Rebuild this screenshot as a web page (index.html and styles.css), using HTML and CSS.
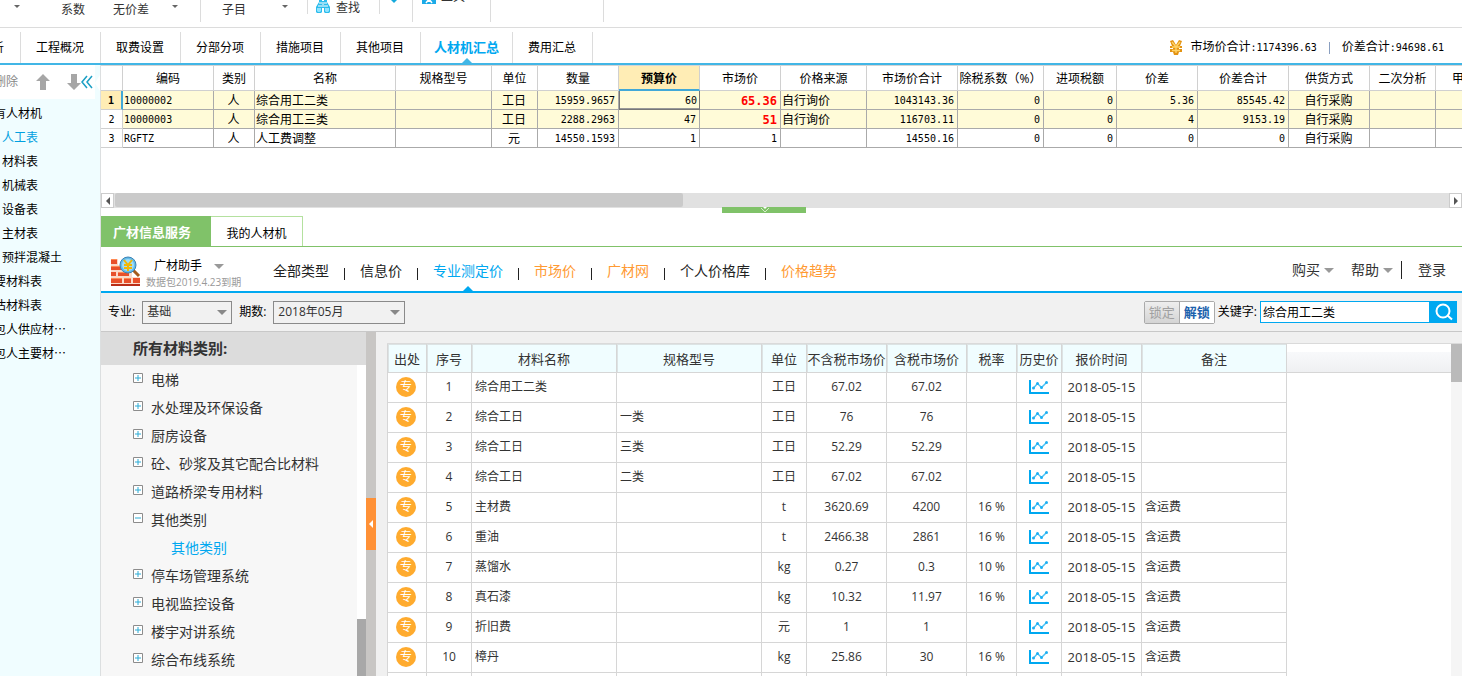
FILE: index.html
```html
<!DOCTYPE html>
<html lang="zh-CN">
  <head>
    <meta charset="UTF-8" />
    <meta name="viewport" content="width=device-width, initial-scale=1.0" />
    <title>人材机汇总</title>
    <link rel="stylesheet" href="styles.css" />
  </head>
  <body>
    <svg class="sprite" aria-hidden="true">
      <symbol id="chart" viewBox="0 0 20 14">
        <path d="M1 0V13H20" fill="none" stroke="#00a8f0" stroke-width="2" />
        <path d="M4.500 8L8.500 3.500L12.500 7.500L17.500 2.500" fill="none" stroke="#4cc2f4" stroke-width="1.500" />
        <circle cx="4.500" cy="8" r="1.500" fill="#1eb0f2" />
        <circle cx="8.500" cy="3.500" r="1.500" fill="#1eb0f2" />
        <circle cx="12.500" cy="7.500" r="1.500" fill="#1eb0f2" />
        <circle cx="17.500" cy="2.500" r="1.500" fill="#1eb0f2" />
      </symbol>
      <symbol id="plus" viewBox="0 0 10 10">
        <path d="M.5 .5H9.500V9.500H.5Z" fill="#fff" stroke="#8c8c8c" />
        <path d="M2 5H8M5 2V8" stroke="#2cacd6" />
      </symbol>
      <symbol id="minus" viewBox="0 0 10 10">
        <path d="M.5 .5H9.500V9.500H.5Z" fill="#fff" stroke="#8c8c8c" />
        <path d="M2 5H8" stroke="#2cacd6" />
      </symbol>
    </svg>

    <header class="ribbon">
      <div class="ribbon-group group-adjust">
        <i class="caret"></i><span>系数</span><span>无价差</span><i class="caret"></i>
      </div>
      <div class="ribbon-group group-item"><span>子目</span><i class="caret"></i></div>
      <div class="ribbon-group group-find">
        <svg width="16" height="16" viewBox="0 0 16 16">
          <path d="M4 0H7V3H9V0H12V4L15 9V14L14 15H10L9 14V10H7V14L6 15H2L1 14V9L4 4Z" fill="#2cbcec" />
          <path d="M4 5H7M9 5H12M3 8H7M9 8H13M8 4V9" stroke="#fff" />
          <path d="M2 10H6V13L5 14H3L2 13ZM10 10H14V13L13 14H11L10 13Z" fill="#8fe3ff" />
        </svg>
        <span>查找</span>
      </div>
      <div class="ribbon-group group-more"><i class="caret caret-blue"></i></div>
      <div class="ribbon-group group-tool">
        <svg width="14" height="14" viewBox="0 0 14 14">
          <path d="M0 0H14V14H0Z" fill="#1cabe8" />
          <path d="M4 13L7 9L10 13M4 8L7 11L10 8" fill="none" stroke="#fff" stroke-width="1.500" />
        </svg>
        <span>工具</span>
      </div>
      <div class="ribbon-group group-empty"></div>
    </header>

    <div class="tabbar">
      <nav class="tabs">
        <a href="#">造价分析</a>
        <a href="#">工程概况</a>
        <a href="#">取费设置</a>
        <a href="#">分部分项</a>
        <a href="#">措施项目</a>
        <a href="#">其他项目</a>
        <a href="#" class="active">人材机汇总</a>
        <a href="#">费用汇总</a>
      </nav>
      <div class="totals">
        <svg width="14" height="16" viewBox="0 0 14 16">
          <path d="M1 1L4 0L7 5L10 0L13 1L11 6H13V8H10V9H13V12H10L9 15H5L4 12H1V9H4V8H1V6H3Z" fill="#e39312" />
          <path d="M3 2L7 7L11 2M3 7H11M3 10.500H11M7 7V13" fill="none" stroke="#ffd469" stroke-width="1.300" />
        </svg>
        <span>市场价合计<b class="num">:1174396.63</b></span>
        <i class="divider"></i>
        <span>价差合计<b class="num">:94698.61</b></span>
      </div>
    </div>

    <div class="workspace">
      <aside class="sidebar">
        <div class="sidebar-tools">
          <button class="delete-btn">删除</button>
          <button class="icon-btn" aria-label="上移">
            <svg width="14" height="16" viewBox="0 0 14 16"><path d="M7 0L14 7H10V16H4V7H0Z" fill="#a6a6a6" /></svg>
          </button>
          <button class="icon-btn" aria-label="下移">
            <svg width="14" height="16" viewBox="0 0 14 16"><path d="M7 16L14 9H10V0H4V9H0Z" fill="#a6a6a6" /></svg>
          </button>
          <button class="icon-btn" aria-label="收起">
            <svg width="12" height="14" viewBox="0 0 12 14"><path d="M6 1L1 7L6 13M11 1L6 7L11 13" fill="none" stroke="#1c9fc4" stroke-width="1.500" /></svg>
          </button>
        </div>
        <i class="notch"></i>
        <ul class="category-list">
          <li>所有人材机</li>
          <li class="child selected">人工表</li>
          <li class="child">材料表</li>
          <li class="child">机械表</li>
          <li class="child">设备表</li>
          <li class="child">主材表</li>
          <li class="child">预拌混凝土</li>
          <li>主要材料表</li>
          <li>暂估材料表</li>
          <li>发包人供应材⋯</li>
          <li>承包人主要材⋯</li>
        </ul>
      </aside>

      <main class="main">
        <div class="summary">
          <table class="summary-table">
            <colgroup>
              <col class="w22" /><col class="w91" /><col class="w41" /><col class="w141" /><col class="w96" /><col class="w46" />
              <col class="w81" /><col class="w81" /><col class="w81" /><col class="w86" /><col class="w91" /><col class="w86" />
              <col class="w73" /><col class="w81" /><col class="w91" /><col class="w81" /><col class="w66" /><col class="w81" />
            </colgroup>
            <thead>
              <tr>
                <th></th><th>编码</th><th>类别</th><th>名称</th><th>规格型号</th><th>单位</th><th>数量</th>
                <th class="current">预算价</th><th>市场价</th><th>价格来源</th><th>市场价合计</th><th>除税系数（%）</th>
                <th>进项税额</th><th>价差</th><th>价差合计</th><th>供货方式</th><th>二次分析</th><th>甲供数量</th>
              </tr>
            </thead>
            <tbody>
              <tr class="changed current-row">
                <th>1</th><td class="code">10000002</td><td class="mid">人</td><td>综合用工二类</td><td></td><td class="mid">工日</td>
                <td class="num">15959.9657</td><td class="num focus">60</td><td class="num up">65.36</td><td>自行询价</td>
                <td class="num">1043143.36</td><td class="num">0</td><td class="num">0</td><td class="num">5.36</td>
                <td class="num">85545.42</td><td class="mid">自行采购</td><td></td><td></td>
              </tr>
              <tr class="changed">
                <th>2</th><td class="code">10000003</td><td class="mid">人</td><td>综合用工三类</td><td></td><td class="mid">工日</td>
                <td class="num">2288.2963</td><td class="num">47</td><td class="num up">51</td><td>自行询价</td>
                <td class="num">116703.11</td><td class="num">0</td><td class="num">0</td><td class="num">4</td>
                <td class="num">9153.19</td><td class="mid">自行采购</td><td></td><td></td>
              </tr>
              <tr>
                <th>3</th><td class="code">RGFTZ</td><td class="mid">人</td><td>人工费调整</td><td></td><td class="mid">元</td>
                <td class="num">14550.1593</td><td class="num">1</td><td class="num">1</td><td></td>
                <td class="num">14550.16</td><td class="num">0</td><td class="num">0</td><td class="num">0</td>
                <td class="num">0</td><td class="mid">自行采购</td><td></td><td></td>
              </tr>
            </tbody>
          </table>
        </div>

        <div class="hscroll">
          <button class="scroll-btn" aria-label="向左"><i class="tri-left"></i></button>
          <div class="hscroll-track"><div class="hscroll-thumb"></div></div>
          <button class="scroll-btn" aria-label="向右"><i class="tri-right"></i></button>
        </div>
        <div class="handle">
          <svg width="84" height="6" viewBox="0 0 84 6">
            <path d="M0 0H84V6H0Z" fill="#80c269" />
            <path d="M41 0H45L43 2Z" fill="#fff" />
            <path d="M39 1L43 5L47 1" fill="none" stroke="#d5edca" />
          </svg>
        </div>

        <div class="service-tabs">
          <button class="service-tab on">广材信息服务</button>
          <button class="service-tab">我的人材机</button>
        </div>

        <div class="helper">
          <svg class="logo" width="32" height="32" viewBox="0 0 32 32">
            <path d="M1 3H8V9H14V15H22V21H30V30H1Z" fill="#fbd9c8" />
            <path d="M1 3H7V8H1ZM1 10H11V14H1ZM1 16H6V20H1ZM8 16H19V20H8ZM1 22H12V27H1ZM14 22H21V27H14ZM23 22H30V27H23Z" fill="#e8502a" />
            <path d="M1 3H7V4H1ZM1 10H11V11H1ZM8 16H19V17H8ZM1 22H12V23H1ZM14 22H21V23H14Z" fill="#ff8a55" />
            <path d="M1 28H30V30H1Z" fill="#b92d17" />
            <path d="M23 14L29 20" stroke="#a35a1b" stroke-width="3" />
            <circle cx="18" cy="9" r="8" fill="#65bdea" stroke="#3b82b5" />
            <circle cx="18" cy="9" r="6" fill="#9fdcf8" />
            <path d="M14 4L18 9L22 4M14 9H22M14 12H22M18 9V15" fill="none" stroke="#f2b705" stroke-width="2" />
          </svg>
          <div class="helper-name">
            <div class="helper-title">广材助手 <i class="caret-down"></i></div>
            <div class="helper-sub">数据包2019.4.23到期</div>
          </div>
          <nav class="price-nav">
            <a href="#">全部类型</a><a href="#">信息价</a><a href="#" class="active">专业测定价</a><a href="#" class="hot">市场价</a><a href="#" class="hot">广材网</a><a href="#">个人价格库</a><a href="#" class="hot">价格趋势</a>
          </nav>
          <div class="account">
            <a href="#">购买</a><i class="caret-down"></i>
            <a href="#" class="help">帮助</a><i class="caret-down"></i>
            <a href="#" class="login">登录</a>
          </div>
        </div>

        <form class="filter">
          <label for="major">专业:</label>
          <div class="select-wrap major"><select id="major"><option>基础</option></select></div>
          <label for="period">期数:</label>
          <div class="select-wrap period"><select id="period"><option>2018年05月</option></select></div>
          <div class="lock-group">
            <button type="button" class="lock" disabled>锁定</button><button type="button" class="unlock">解锁</button>
          </div>
          <label for="keyword">关键字:</label>
          <input id="keyword" type="text" value="综合用工二类" />
          <button type="button" class="search-btn" aria-label="搜索">
            <svg width="20" height="18" viewBox="0 0 20 18">
              <circle cx="9" cy="8" r="6.500" fill="none" stroke="#fff" stroke-width="2" />
              <path d="M13.500 12.500L18 16.500" stroke="#fff" stroke-width="2" />
            </svg>
          </button>
        </form>

        <div class="lower">
          <section class="tree">
            <h2>所有材料类别:</h2>
            <div class="tree-body">
              <ul>
                <li><svg class="toggle"><use href="#plus" /></svg>电梯</li>
                <li><svg class="toggle"><use href="#plus" /></svg>水处理及环保设备</li>
                <li><svg class="toggle"><use href="#plus" /></svg>厨房设备</li>
                <li><svg class="toggle"><use href="#plus" /></svg>砼、砂浆及其它配合比材料</li>
                <li><svg class="toggle"><use href="#plus" /></svg>道路桥梁专用材料</li>
                <li><svg class="toggle"><use href="#minus" /></svg>其他类别</li>
                <li class="leaf">其他类别</li>
                <li><svg class="toggle"><use href="#plus" /></svg>停车场管理系统</li>
                <li><svg class="toggle"><use href="#plus" /></svg>电视监控设备</li>
                <li><svg class="toggle"><use href="#plus" /></svg>楼宇对讲系统</li>
                <li><svg class="toggle"><use href="#plus" /></svg>综合布线系统</li>
              </ul>
              <div class="tree-scroll"><div class="tree-thumb"></div></div>
            </div>
          </section>
          <div class="splitter"><button class="collapse" aria-label="折叠"><i class="tri-left white"></i></button></div>
          <section class="result">
            <table class="price-table">
              <colgroup>
                <col class="w40" /><col class="w45" /><col class="w145" /><col class="w145" /><col class="w45" /><col class="w80" />
                <col class="w80" /><col class="w50" /><col class="w45" /><col class="w80" /><col class="w145" />
              </colgroup>
              <thead>
                <tr>
                  <th>出处</th><th>序号</th><th>材料名称</th><th>规格型号</th><th>单位</th><th>不含税市场价</th>
                  <th>含税市场价</th><th>税率</th><th>历史价</th><th>报价时间</th><th>备注</th>
                </tr>
              </thead>
              <tbody>
                <tr><td><i class="badge">专</i></td><td>1</td><td class="left">综合用工二类</td><td class="left"></td><td>工日</td><td>67.02</td><td>67.02</td><td></td><td><svg class="chart"><use href="#chart" /></svg></td><td class="date">2018-05-15</td><td class="left"></td></tr>
                <tr><td><i class="badge">专</i></td><td>2</td><td class="left">综合工日</td><td class="left">一类</td><td>工日</td><td>76</td><td>76</td><td></td><td><svg class="chart"><use href="#chart" /></svg></td><td class="date">2018-05-15</td><td class="left"></td></tr>
                <tr><td><i class="badge">专</i></td><td>3</td><td class="left">综合工日</td><td class="left">三类</td><td>工日</td><td>52.29</td><td>52.29</td><td></td><td><svg class="chart"><use href="#chart" /></svg></td><td class="date">2018-05-15</td><td class="left"></td></tr>
                <tr><td><i class="badge">专</i></td><td>4</td><td class="left">综合工日</td><td class="left">二类</td><td>工日</td><td>67.02</td><td>67.02</td><td></td><td><svg class="chart"><use href="#chart" /></svg></td><td class="date">2018-05-15</td><td class="left"></td></tr>
                <tr><td><i class="badge">专</i></td><td>5</td><td class="left">主材费</td><td class="left"></td><td>t</td><td>3620.69</td><td>4200</td><td>16 %</td><td><svg class="chart"><use href="#chart" /></svg></td><td class="date">2018-05-15</td><td class="left">含运费</td></tr>
                <tr><td><i class="badge">专</i></td><td>6</td><td class="left">重油</td><td class="left"></td><td>t</td><td>2466.38</td><td>2861</td><td>16 %</td><td><svg class="chart"><use href="#chart" /></svg></td><td class="date">2018-05-15</td><td class="left">含运费</td></tr>
                <tr><td><i class="badge">专</i></td><td>7</td><td class="left">蒸馏水</td><td class="left"></td><td>kg</td><td>0.27</td><td>0.3</td><td>10 %</td><td><svg class="chart"><use href="#chart" /></svg></td><td class="date">2018-05-15</td><td class="left">含运费</td></tr>
                <tr><td><i class="badge">专</i></td><td>8</td><td class="left">真石漆</td><td class="left"></td><td>kg</td><td>10.32</td><td>11.97</td><td>16 %</td><td><svg class="chart"><use href="#chart" /></svg></td><td class="date">2018-05-15</td><td class="left">含运费</td></tr>
                <tr><td><i class="badge">专</i></td><td>9</td><td class="left">折旧费</td><td class="left"></td><td>元</td><td>1</td><td>1</td><td></td><td><svg class="chart"><use href="#chart" /></svg></td><td class="date">2018-05-15</td><td class="left">含运费</td></tr>
                <tr><td><i class="badge">专</i></td><td>10</td><td class="left">樟丹</td><td class="left"></td><td>kg</td><td>25.86</td><td>30</td><td>16 %</td><td><svg class="chart"><use href="#chart" /></svg></td><td class="date">2018-05-15</td><td class="left">含运费</td></tr>
                <tr><td></td><td></td><td></td><td></td><td></td><td></td><td></td><td></td><td></td><td></td><td></td></tr>
              </tbody>
            </table>
            <div class="header-fill"></div>
            <div class="result-scroll"><div class="result-thumb"></div></div>
          </section>
        </div>
      </main>
    </div>
  </body>
</html>
```

FILE: styles.css
```css
* {
  box-sizing: border-box;
}
body {
  display: flex;
  flex-direction: column;
  height: 100vh;
  margin: 0;
  overflow: hidden;
  background-color: #fff;
  color: #000;
  font-family: "Open Sans", "Noto Sans CJK SC", sans-serif;
  font-size: 12px;
  line-height: 18px;
}
a {
  color: inherit;
  text-decoration: none;
}
button,
input,
select {
  margin: 0;
  padding: 0;
  border: none;
  background: none;
  font: inherit;
  color: inherit;
}
ul {
  margin: 0;
  padding: 0;
  list-style: none;
}
svg {
  display: block;
  flex: none;
}
.sprite {
  position: absolute;
  width: 0;
  height: 0;
}

/* ribbon */
.ribbon {
  display: flex;
  flex: none;
  height: 28px;
  overflow: hidden;
  border-bottom: 1px solid #dcdcdc;
  color: #333;
}
.ribbon-group {
  display: flex;
  align-items: flex-start;
  height: 22px;
  border-right: 1px solid #dcdcdc;
}
.ribbon-group span {
  margin-top: 1px;
}
.caret {
  margin-top: 5px;
  border: 3px solid transparent;
  border-top-color: #666;
  border-bottom: none;
}
.caret-blue {
  margin-top: 0;
  border-top-color: #14a9dc;
}
.group-adjust {
  width: 201px;
  padding-left: 14px;
}
.group-adjust span:nth-of-type(1) {
  margin-left: 41px;
}
.group-adjust span:nth-of-type(2) {
  margin: 1px 23px 0 28px;
}
.group-item {
  gap: 36px;
  width: 106px;
  padding-left: 21px;
  border-right: none;
}
.group-find {
  gap: 5px;
  width: 73px;
  height: 14px;
  padding-left: 7px;
  border-left: 1px solid #dcdcdc;
}
.group-find svg {
  margin-top: -2px;
}
.group-find span {
  margin-top: -1px;
}
.group-more {
  width: 33px;
  padding-left: 11px;
}
.group-tool {
  gap: 5px;
  width: 78px;
  padding-left: 9px;
}
.group-tool svg {
  margin-top: -10px;
}
.group-tool span {
  margin-top: -12px;
}
.group-empty {
  width: 113px;
}

/* module tabs */
.tabbar {
  display: flex;
  flex: none;
  justify-content: space-between;
  height: 37px;
  padding: 4px 18px 0 0;
  overflow: hidden;
  border-bottom: 2px solid #41b6e6;
}
.tabs {
  display: flex;
  margin-left: -59px;
}
.tabs a {
  position: relative;
  padding: 1px 16px 0 15px;
  border-right: 1px solid #dcdcdc;
  line-height: 30px;
}
.tabs .active {
  padding: 0 13px;
  color: #00a8f0;
  font-size: 13px;
  font-weight: bold;
}
.tabs .active::after,
.price-nav .active::after {
  content: "";
  position: absolute;
  bottom: 0;
  left: 50%;
  margin-left: -5px;
  border: 5px solid transparent;
  border-top: none;
  border-bottom-color: #41b6e6;
}
.totals {
  display: flex;
  align-items: center;
}
.totals svg {
  margin-right: 8px;
}
.totals .num {
  font-weight: normal;
}
.num,
.code {
  font-family: "DejaVu Sans Mono", monospace;
  font-size: 10px;
}
.divider {
  width: 1px;
  height: 12px;
  margin: 0 12px;
  background-color: #8a9fc0;
}

/* sidebar */
.workspace {
  display: flex;
  flex: 1;
  min-height: 0;
}
.sidebar {
  position: relative;
  flex: none;
  width: 101px;
  overflow: hidden;
  border-right: 1px solid #dcdfe0;
  background-color: #f0fdff;
}
.sidebar-tools {
  display: flex;
  align-items: center;
  width: 95px;
  height: 34px;
  margin-bottom: 3px;
  background-color: #fff;
}
.delete-btn {
  margin: 0 18px 0 -6px;
  color: #888;
}
.icon-btn + .icon-btn {
  margin-left: 17px;
}
.icon-btn + .icon-btn + .icon-btn {
  margin-left: 0;
}
.notch {
  position: absolute;
  top: 10px;
  right: 0;
  border: 8px solid transparent;
  border-right: 5px solid #fff;
  border-left: none;
}
.category-list {
  margin-left: -18px;
  line-height: 24px;
  white-space: nowrap;
}
.child {
  padding-left: 20px;
}
.selected {
  color: #00a0e0;
}

/* summary grid */
.main {
  display: flex;
  flex: 1;
  flex-direction: column;
  min-width: 0;
}
.summary {
  flex: none;
  height: 128px;
  overflow: hidden;
}
table {
  border-spacing: 0;
  table-layout: fixed;
}
.summary-table {
  width: 1416px;
  border-top: 1px solid #d4d4d4;
}
.w22 { width: 22px; }
.w40 { width: 40px; }
.w41 { width: 41px; }
.w45 { width: 45px; }
.w46 { width: 46px; }
.w50 { width: 50px; }
.w66 { width: 66px; }
.w73 { width: 73px; }
.w80 { width: 80px; }
.w81 { width: 81px; }
.w86 { width: 86px; }
.w91 { width: 91px; }
.w96 { width: 96px; }
.w141 { width: 141px; }
.w145 { width: 145px; }
.summary-table th,
.summary-table td {
  height: 19px;
  padding: 2px 2px 0 1px;
  overflow: hidden;
  border-right: 1px solid #aaa;
  border-bottom: 1px solid #aaa;
  line-height: 16px;
  white-space: nowrap;
}
.summary-table th {
  padding: 2px 0 0;
  border-color: #d0d0d0;
  font-weight: normal;
}
.summary-table tbody th {
  font-family: "DejaVu Sans Mono", monospace;
  font-size: 10px;
}
.summary-table thead th {
  height: 25px;
}
.summary-table thead .current {
  border-bottom: 2px solid #41a8d8;
  background-color: #ffedb5;
  font-weight: bold;
}
.changed td {
  background-color: #fffbd8;
}
.summary-table .current-row th {
  border-right: 2px solid #41a8d8;
  background-color: #ffedb5;
  font-weight: bold;
}
.mid {
  text-align: center;
}
.summary-table .num {
  padding-right: 3px;
  text-align: right;
}
.summary-table .up {
  color: #f00;
  font-size: 12px;
  font-weight: bold;
}
.summary-table .focus {
  padding-right: 2px;
  border-color: #777;
  box-shadow: inset 1px 0 #777, inset 0 -1px #999;
}

.hscroll {
  display: flex;
  flex: none;
  height: 15px;
  background-color: #e1e1e1;
}
.scroll-btn {
  display: flex;
  align-items: center;
  justify-content: center;
  width: 13px;
  border: 1px solid #ccc;
  background-color: #fff;
}
.hscroll-track {
  flex: 1;
  padding-left: 1px;
}
.hscroll-thumb {
  width: 568px;
  height: 14px;
  border-radius: 2px;
  background-color: #cacaca;
}
.tri-left,
.tri-right {
  border: 4px solid transparent;
}
.tri-left {
  border-right-color: #555;
  border-left: none;
}
.tri-right {
  border-left-color: #555;
  border-right: none;
}
.white {
  border-right-color: #fff;
}
.handle {
  display: flex;
  flex: none;
  justify-content: center;
  height: 9px;
  margin-top: -1px;
  padding-right: 35px;
}

/* service panel */
.service-tabs {
  display: flex;
  flex: none;
  height: 31px;
  border-bottom: 1px solid #80c269;
}
.service-tab {
  width: 92px;
  padding-top: 4px;
  border: 1px solid #b4e19f;
  border-width: 1px 1px 0 0;
}
.service-tab.on {
  width: 110px;
  padding: 2px 8px 0 0;
  border: none;
  background-color: #80c269;
  color: #fff;
  font-size: 13px;
  font-weight: bold;
}
.helper {
  display: flex;
  flex: none;
  height: 46px;
  padding: 0 16px 0 9px;
  border-bottom: 2px solid #00a8f0;
}
.logo {
  margin-top: 9px;
}
.helper-name {
  width: 131px;
  padding: 10px 0 0 4px;
}
.helper-title {
  display: flex;
  gap: 12px;
  align-items: center;
  padding-left: 8px;
}
.helper-sub {
  color: #999;
  font-size: 10px;
  line-height: 14px;
}
.caret-down {
  border: 5px solid transparent;
  border-top-color: #999;
  border-bottom: none;
}
.price-nav {
  display: flex;
  color: #222;
  font-size: 14px;
  line-height: 48px;
}
.price-nav a {
  position: relative;
  height: 44px;
}
.price-nav a + a {
  margin-left: 31px;
}
.price-nav a + a::before {
  content: "";
  position: absolute;
  top: 21px;
  left: -16px;
  width: 1px;
  height: 12px;
  background-color: #222;
}
.price-nav .active {
  color: #00a8f0;
}
.price-nav .active::after {
  border-bottom-color: #00a8f0;
}
.price-nav .hot {
  color: #ff9a33;
}
.account {
  display: flex;
  align-items: center;
  margin-left: auto;
  padding-top: 2px;
  color: #333;
  font-size: 14px;
}
.account .caret-down {
  margin-left: 4px;
}
.account .help {
  margin-left: 17px;
}
.account .login {
  margin-left: 8px;
  padding-left: 16px;
  border-left: 1px solid #222;
}

/* filter bar */
.filter {
  display: flex;
  flex: none;
  align-items: center;
  height: 39px;
  padding: 0 5px 0 7px;
  border-bottom: 1px solid #c8c8c8;
  background-color: #f1f1f1;
}
.select-wrap {
  position: relative;
  margin: 0 7px;
}
.select-wrap::after {
  content: "";
  position: absolute;
  top: 9px;
  right: 5px;
  border: 5px solid transparent;
  border-top-color: #888;
  border-bottom: none;
  pointer-events: none;
}
.select-wrap select {
  width: 100%;
  height: 23px;
  padding-left: 4px;
  border: 1px solid #8a8a8a;
  appearance: none;
  color: #333;
}
.major {
  width: 90px;
}
.period {
  width: 132px;
}
.lock-group {
  display: flex;
  height: 23px;
  margin: 0 3px 0 auto;
  border: 1px solid #aaa;
  border-radius: 2px;
  font-size: 13px;
}
.lock-group button {
  width: 34px;
}
.lock {
  background: linear-gradient(#eee, #d4d4d4);
  color: #a0a0a0;
}
.lock-group .unlock {
  width: 35px;
  border-left: 1px solid #aaa;
  background-color: #fff;
  color: #1c62ad;
  font-weight: bold;
}
#keyword {
  width: 170px;
  height: 22px;
  margin-left: 3px;
  padding-left: 2px;
  border: 1px solid #00a8f0;
  background-color: #fff;
}
.search-btn {
  display: flex;
  align-items: center;
  justify-content: center;
  width: 27px;
  height: 22px;
  background-color: #00a8f0;
}

/* material tree */
.lower {
  display: flex;
  flex: 1;
  min-height: 0;
  background-color: #f0f0f0;
  color: #333;
}
.tree {
  display: flex;
  flex: none;
  flex-direction: column;
  width: 265px;
}
.tree h2 {
  flex: none;
  margin: 0;
  padding-left: 32px;
  background-color: #dcdcdc;
  font-size: 15px;
  line-height: 33px;
}
.tree-body {
  display: flex;
  flex: 1;
  min-height: 0;
  overflow: hidden;
  background-color: #f7f7f7;
}
.tree-body ul {
  flex: 1;
  padding: 1px 0 0 32px;
  font-size: 14px;
  line-height: 28px;
}
.tree-body li {
  display: flex;
  gap: 8px;
}
.toggle {
  width: 10px;
  height: 10px;
  margin-top: 7px;
}
.tree-body .leaf {
  padding-left: 38px;
  color: #00a8f0;
}
.tree-scroll {
  display: flex;
  align-items: flex-end;
  width: 9px;
  background-color: #fff;
}
.tree-thumb {
  width: 9px;
  height: 57px;
  background-color: #a8a8a8;
}
.splitter {
  display: flex;
  flex: none;
  align-items: center;
  width: 10px;
  margin-right: 11px;
  padding-top: 40px;
  background-color: #c8c6c4;
}
.collapse {
  display: flex;
  align-items: center;
  justify-content: center;
  width: 10px;
  height: 52px;
  background-color: #ff9136;
}

/* price results */
.result {
  display: flex;
  flex: 1;
  align-items: flex-start;
  min-width: 0;
  margin-top: 11px;
  border-top: 1px solid #dadada;
  background-color: #fff;
}
.price-table {
  flex: none;
  width: 900px;
}
.price-table th,
.price-table td {
  height: 30px;
  padding: 0 0 1px;
  border-right: 1px solid #d6d6d6;
  border-bottom: 1px solid #d6d6d6;
  text-align: center;
  white-space: nowrap;
}
.price-table th {
  height: 29px;
  padding: 1px 0 0;
  background-color: #f0fdff;
  box-shadow: inset 1px 1px #dce3e4;
  font-size: 13px;
  font-weight: normal;
}
.price-table th:first-child,
.price-table td:first-child {
  border-left: 1px solid #d6d6d6;
}
.price-table .left {
  padding-left: 3px;
  text-align: left;
}
.price-table .date {
  font-size: 13px;
}
.badge {
  display: block;
  width: 20px;
  height: 20px;
  margin: 0 auto 0 8px;
  border-radius: 50%;
  background-color: #ffab2e;
  color: #fff;
  font-size: 12px;
  font-style: normal;
  line-height: 20px;
}
.chart {
  width: 20px;
  height: 14px;
  margin: 0 auto;
}
.header-fill {
  flex: 1;
  height: 29px;
  border-bottom: 1px solid #d6d6d6;
  background: linear-gradient(#fff 8px, #f8f9fb 8px, #eff0f2);
}
.result-scroll {
  align-self: stretch;
  width: 11px;
  background-color: #f5f5f5;
}
.result-thumb {
  height: 38px;
  background-color: #bababa;
}
```
